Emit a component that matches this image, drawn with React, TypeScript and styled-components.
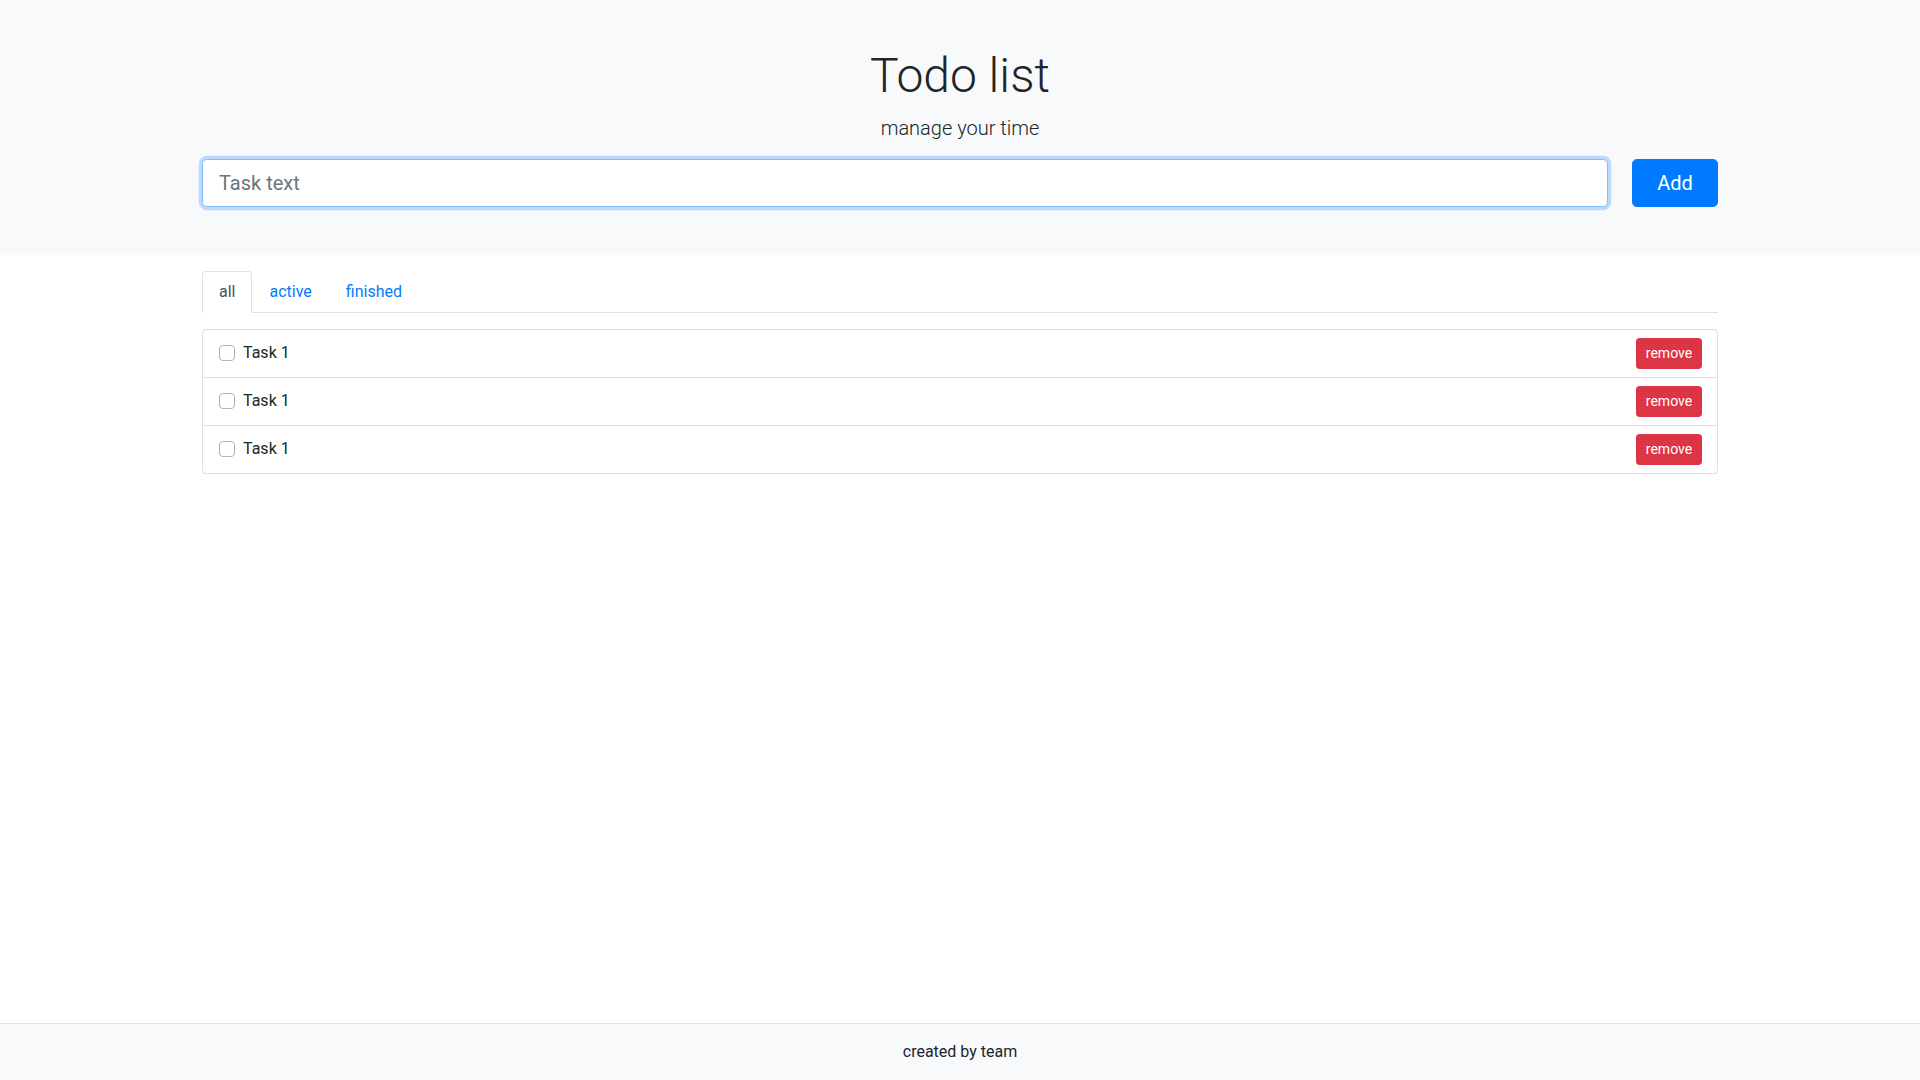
import React from "react";
import styled, { createGlobalStyle } from "styled-components";

const GlobalStyle = createGlobalStyle`
  *, *::before, *::after { box-sizing: border-box; }
  html, body { margin: 0; padding: 0; }
  body {
    font-family: Roboto, "Noto Sans", "Liberation Sans", sans-serif;
    font-size: 16px;
    line-height: 1.5;
    color: #212529;
    background: #fff;
  }
  #root { min-height: 100vh; display: flex; flex-direction: column; }
`;

const Page = styled.div`
  min-height: 100vh;
  display: flex;
  flex-direction: column;
`;

const Header = styled.header`
  background: #f8f9fa;
  padding: 47px 0 48px;
`;

const Container = styled.div`
  width: 100%;
  max-width: 1516px;
  margin: 0 auto;
`;

const Title = styled.h1`
  margin: 0 0 8px;
  font-size: 48px;
  font-weight: 300;
  line-height: 1.2;
  text-align: center;
`;

const Subtitle = styled.p`
  margin: 0 0 16px;
  font-size: 20px;
  font-weight: 300;
  line-height: 1.5;
  text-align: center;
`;

const Form = styled.form`
  display: flex;
  gap: 24px;
`;

const TaskInput = styled.input`
  flex: 1;
  height: 48px;
  padding: 8px 16px;
  font-family: inherit;
  font-size: 20px;
  line-height: 1.5;
  color: #495057;
  background: #fff;
  border: 1px solid #80bdff;
  border-radius: 4.8px;
  box-shadow: 0 0 0 3.2px rgba(0, 123, 255, 0.25);
  outline: none;
  &::placeholder { color: #6c757d; }
`;

const AddButton = styled.button`
  width: 86px;
  height: 48px;
  padding: 8px 16px;
  font-family: inherit;
  font-size: 20px;
  line-height: 1.5;
  color: #fff;
  background: #007bff;
  border: 1px solid #007bff;
  border-radius: 4.8px;
  cursor: pointer;
`;

const Main = styled.main`
  flex: 1;
  padding-top: 16px;
`;

const Tabs = styled.nav`
  display: flex;
  border-bottom: 1px solid #dee2e6;
`;

const Tab = styled.a<{ $active?: boolean }>`
  display: block;
  padding: 8px 16px;
  margin-bottom: -1px;
  font-size: 16px;
  line-height: 24px;
  text-decoration: none;
  cursor: pointer;
  border-width: 1px;
  border-style: solid;
  border-color: ${(p) => (p.$active ? "#dee2e6 #dee2e6 #fff" : "transparent")};
  border-top-left-radius: 4px;
  border-top-right-radius: 4px;
  color: ${(p) => (p.$active ? "#495057" : "#007bff")};
  background: ${(p) => (p.$active ? "#fff" : "transparent")};
`;

const List = styled.ul`
  list-style: none;
  margin: 16px 0 0;
  padding: 0;
  border: 1px solid rgba(0, 0, 0, 0.125);
  border-radius: 4px;
`;

const Item = styled.li`
  display: flex;
  align-items: center;
  justify-content: space-between;
  height: 47px;
  padding: 0 15px 0 16px;
  & + & { border-top: 1px solid rgba(0, 0, 0, 0.125); height: 48px; }
`;

const Label = styled.label`
  display: flex;
  align-items: center;
  gap: 8px;
  font-size: 16px;
  line-height: 24px;
`;

const Check = styled.input`
  appearance: none;
  -webkit-appearance: none;
  width: 16px;
  height: 16px;
  margin: 0;
  border: 1px solid #adb5bd;
  border-radius: 4px;
  background: #fff;
`;

const RemoveButton = styled.button`
  width: 66px;
  height: 31px;
  padding: 4px 8px;
  font-family: inherit;
  font-size: 14px;
  line-height: 21px;
  color: #fff;
  background: #dc3545;
  border: 1px solid #dc3545;
  border-radius: 3.2px;
  cursor: pointer;
`;

const Footer = styled.footer`
  border-top: 1px solid #dee2e6;
  background: #f8f9fa;
  padding: 16px 0;
  text-align: center;
  font-size: 16px;
  line-height: 24px;
`;

const tasks = ["Task 1", "Task 1", "Task 1"];

export default function App() {
  return (
    <Page>
      <GlobalStyle />
      <Header>
        <Container>
          <Title>Todo list</Title>
          <Subtitle>manage your time</Subtitle>
          <Form onSubmit={(e) => e.preventDefault()}>
            <TaskInput placeholder="Task text" />
            <AddButton type="submit">Add</AddButton>
          </Form>
        </Container>
      </Header>
      <Main>
        <Container>
          <Tabs>
            <Tab $active>all</Tab>
            <Tab>active</Tab>
            <Tab>finished</Tab>
          </Tabs>
          <List>
            {tasks.map((t, i) => (
              <Item key={i}>
                <Label>
                  <Check type="checkbox" />
                  {t}
                </Label>
                <RemoveButton>remove</RemoveButton>
              </Item>
            ))}
          </List>
        </Container>
      </Main>
      <Footer>created by team</Footer>
    </Page>
  );
}
